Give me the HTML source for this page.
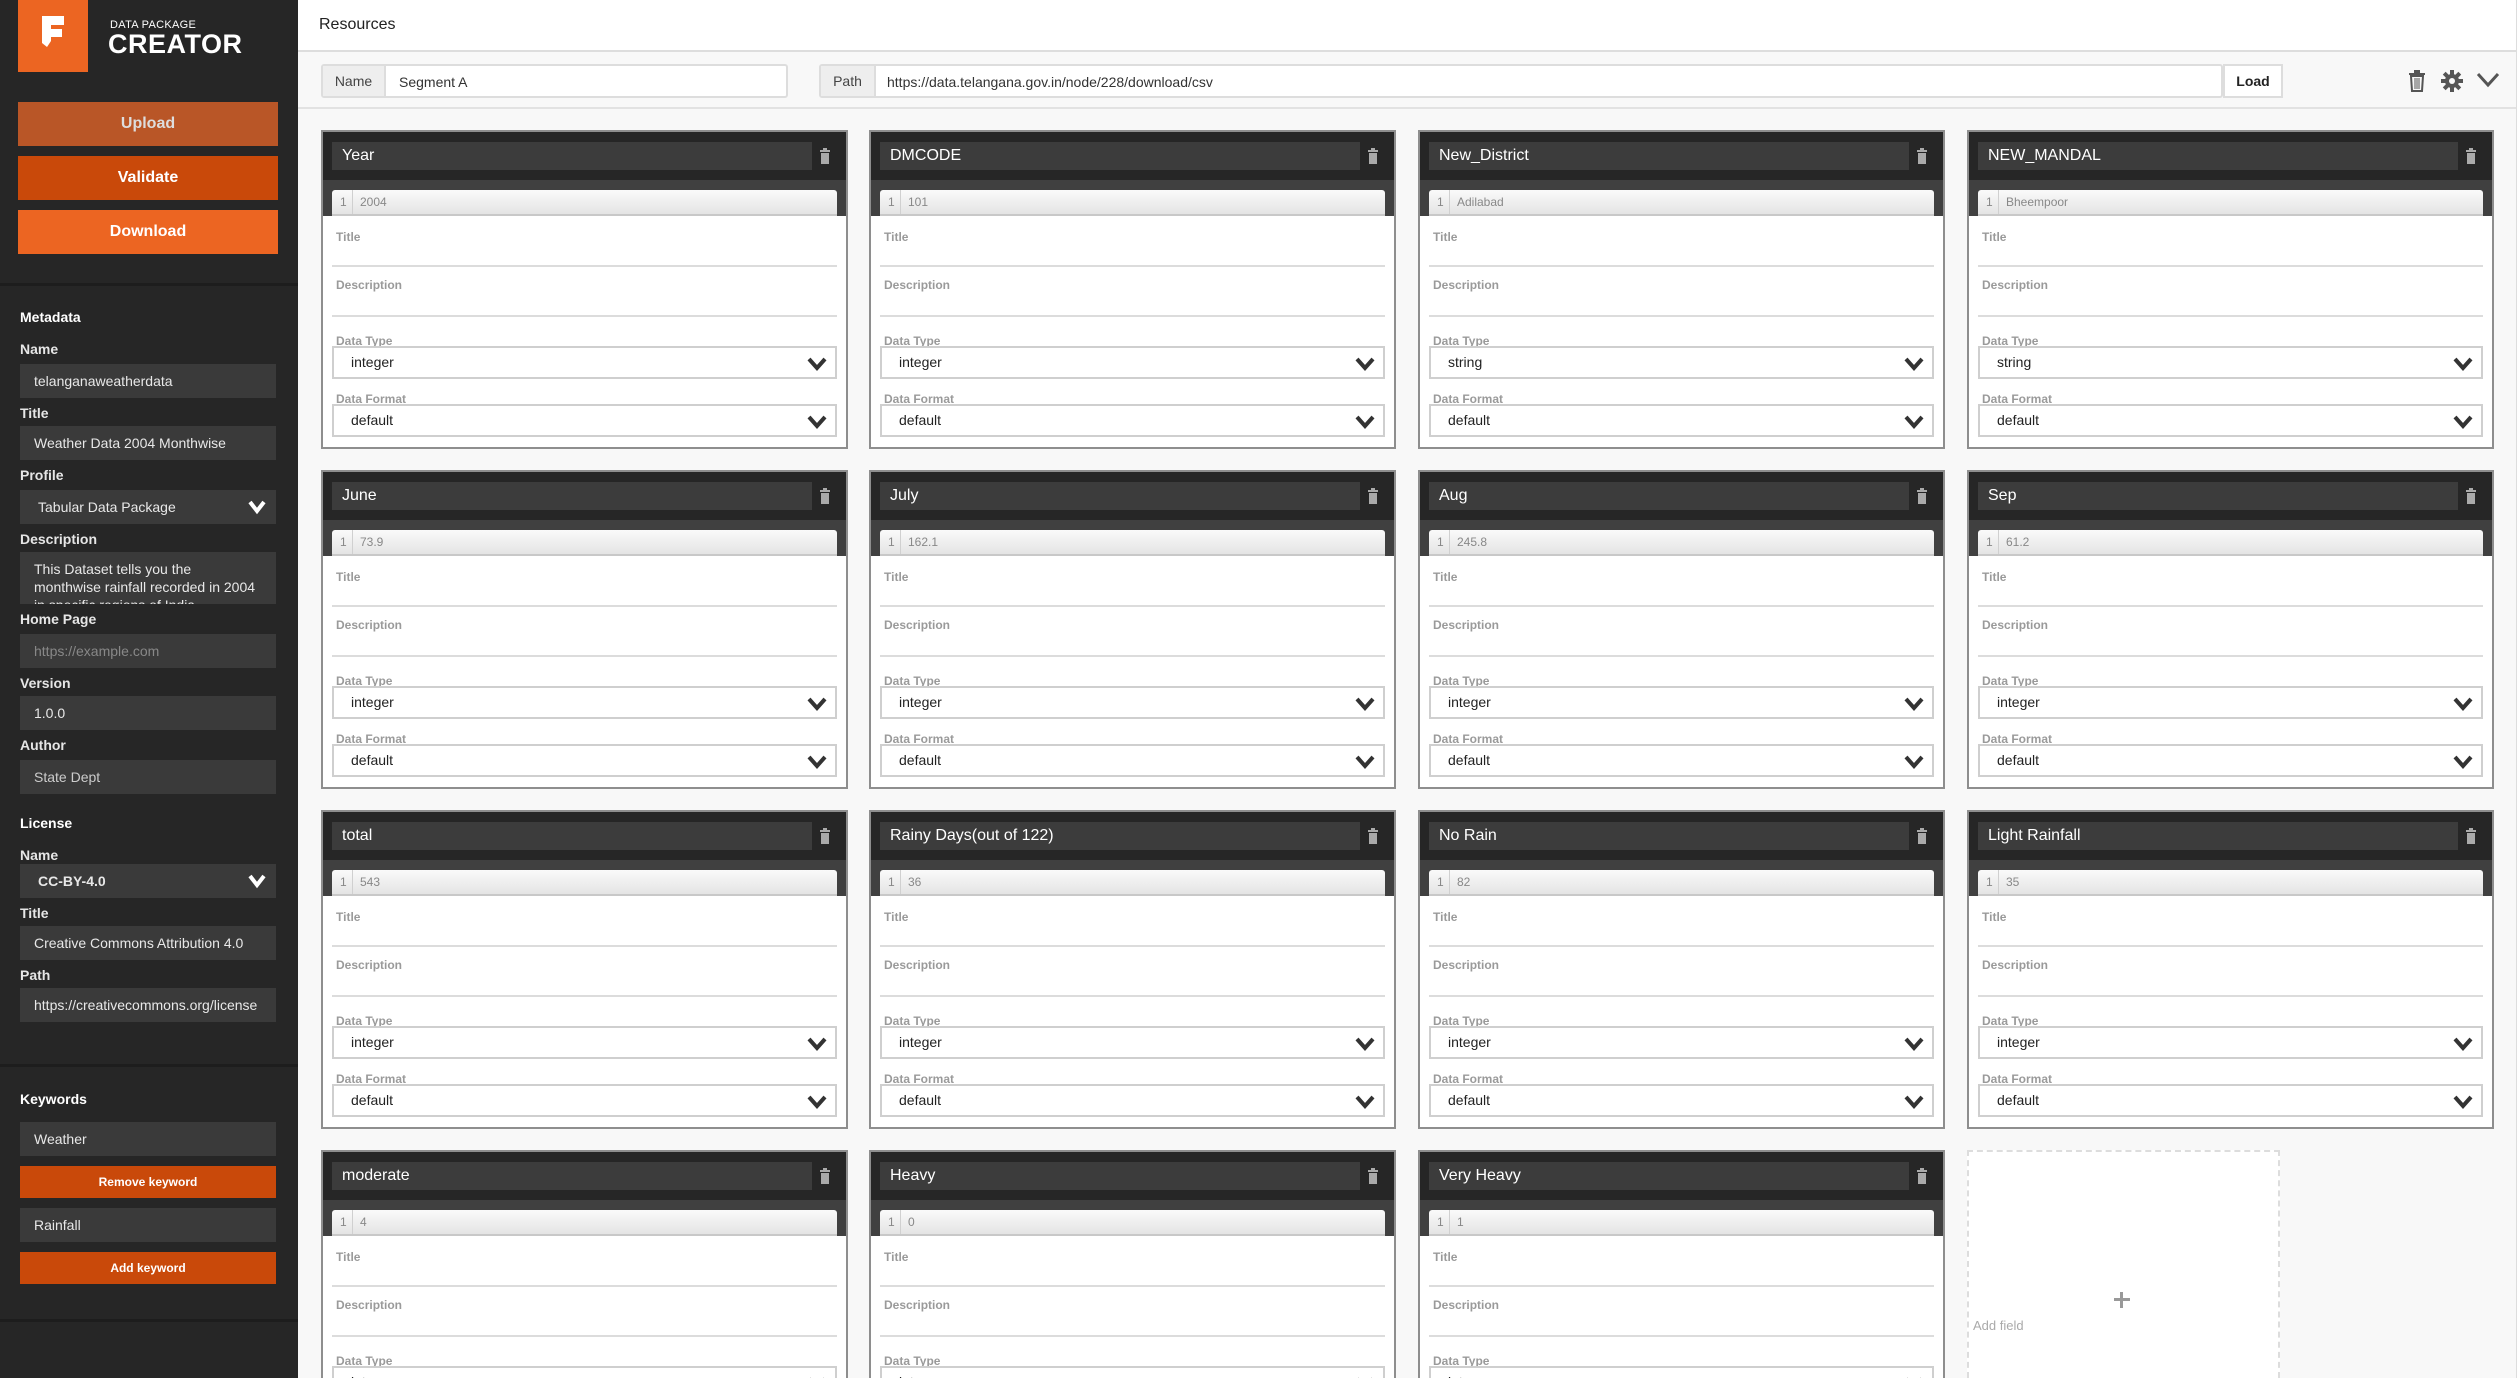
<!DOCTYPE html>
<html style="width:2520px;height:1378px;overflow:hidden"><head><meta charset="utf-8"><style>
*{box-sizing:border-box;margin:0;padding:0}
body{width:2520px;height:1378px;overflow:hidden;background:#f8f8f8;font-family:"Liberation Sans",Arial,sans-serif;position:relative}
.a{position:absolute}
#sb{left:0;top:0;width:298px;height:1378px;background:#262626}
.logo{left:18px;top:0;width:70px;height:72px;background:#ec6522}
.btn{left:18px;width:260px;height:44px;color:#fff;font-weight:bold;font-size:16px;text-align:center;line-height:44px}
.sl{left:20px;color:#e6e6e6;font-size:14px;font-weight:bold}
.si{left:20px;width:256px;height:34px;background:#3a3a3a;color:#e8e8e8;font-size:14px;line-height:34px;padding-left:14px;white-space:nowrap;overflow:hidden}
.sep{left:0;width:298px;height:3px;background:#1d1d1d}
.kb{left:20px;width:256px;height:32px;background:#c9490a;color:#fff;font-weight:bold;font-size:12px;text-align:center;line-height:32px}
.chev{position:absolute;right:10px;top:9px}
.c{position:absolute;width:527px;height:319px;border:2px solid #8e8e8e;background:#fff;overflow:hidden}
.c.last{height:240px;border-bottom:none}
.h{position:absolute;left:0;top:0;width:100%;height:48px;background:#262626}
.n{position:absolute;left:9px;top:10px;width:480px;height:28px;background:#3c3c3c;color:#fff;font-size:16px;line-height:28px;padding-left:10px}
.tr{position:absolute;left:497px;top:16px}
.bd{position:absolute;left:0;top:48px;width:100%;height:36px;background:#404040}
.s{position:absolute;left:9px;top:58px;width:505px;height:26px;background:linear-gradient(#fafafa,#e4e4e4);border-radius:3px 3px 0 0;border-bottom:2px solid #c8c8c8;font-size:12px;color:#888;line-height:24px}
.s i{font-style:normal;position:absolute;left:8px}
.s b{font-weight:normal;position:absolute;left:20px;top:0;width:1px;height:24px;background:#d0d0d0}
.s u{text-decoration:none;position:absolute;left:28px}
.l{position:absolute;left:13px;font-size:12px;font-weight:bold;color:#9a9a9a}
.ul{position:absolute;left:9px;width:505px;height:2px;background:#dcdcdc}
.sel{position:absolute;left:9px;width:505px;height:33px;border:2px solid #cfcfcf;font-size:14px;color:#222;line-height:29px;padding-left:17px}
.sel svg{position:absolute;right:8px;top:8px}
</style></head><body>
<div id="sb" class="a">
 <div class="a logo"><svg width="70" height="72"><path d="M24 16h22v9H33v4h11v8H33v4l-4 6-5-4z" fill="#fff"/></svg></div>
 <div class="a" style="left:110px;top:19px;color:#fff;font-size:11px;letter-spacing:.3px">DATA PACKAGE</div>
 <div class="a" style="left:108px;top:29px;color:#fff;font-size:27px;font-weight:bold;letter-spacing:.5px">CREATOR</div>
 <div class="a btn" style="top:102px;background:#b95627;color:#ddd">Upload</div>
 <div class="a btn" style="top:156px;background:#c9490a">Validate</div>
 <div class="a btn" style="top:210px;background:#ec6522">Download</div>
 <div class="a sep" style="top:283px"></div>
 <div class="a sl" style="top:309px;color:#fff">Metadata</div>
 <div class="a sl" style="top:341px">Name</div>
 <div class="a si" style="top:364px">telanganaweatherdata</div>
 <div class="a sl" style="top:405px">Title</div>
 <div class="a si" style="top:426px">Weather Data 2004 Monthwise</div>
 <div class="a sl" style="top:467px">Profile</div>
 <div class="a si" style="top:490px;padding-left:18px">Tabular Data Package<svg class="chev" width="18" height="16"><path d="M2 3l7 9 7-9" stroke="#fff" stroke-width="4" fill="none"/></svg></div>
 <div class="a sl" style="top:531px">Description</div>
 <div class="a si" style="top:552px;height:52px;line-height:18px;padding-top:8px;padding-right:20px;white-space:normal">This Dataset tells you the monthwise rainfall recorded in 2004 in specific regions of India</div>
 <div class="a sl" style="top:611px">Home Page</div>
 <div class="a si" style="top:634px;color:#888">https://example.com</div>
 <div class="a sl" style="top:675px">Version</div>
 <div class="a si" style="top:696px">1.0.0</div>
 <div class="a sl" style="top:737px">Author</div>
 <div class="a si" style="top:760px;color:#ccc">State Dept</div>
 <div class="a sl" style="top:815px;color:#fff">License</div>
 <div class="a sl" style="top:847px">Name</div>
 <div class="a si" style="top:864px;padding-left:18px;font-weight:bold">CC-BY-4.0<svg class="chev" width="18" height="16"><path d="M2 3l7 9 7-9" stroke="#fff" stroke-width="4" fill="none"/></svg></div>
 <div class="a sl" style="top:905px">Title</div>
 <div class="a si" style="top:926px">Creative Commons Attribution 4.0</div>
 <div class="a sl" style="top:967px">Path</div>
 <div class="a si" style="top:988px">https://creativecommons.org/license</div>
 <div class="a sep" style="top:1064px"></div>
 <div class="a sl" style="top:1091px;color:#fff">Keywords</div>
 <div class="a si" style="top:1122px">Weather</div>
 <div class="a kb" style="top:1166px">Remove keyword</div>
 <div class="a si" style="top:1208px">Rainfall</div>
 <div class="a kb" style="top:1252px">Add keyword</div>
 <div class="a sep" style="top:1319px"></div>
</div>
<div class="a" style="left:298px;top:0;width:2222px;height:52px;background:#fff;border-bottom:2px solid #ddd"></div>
<div class="a" style="left:319px;top:16px;font-size:16px;color:#222">Resources</div>
<div class="a" style="left:298px;top:107px;width:2218px;height:2px;background:#e2e2e2"></div>
<div class="a" style="left:2516px;top:0;width:4px;height:1378px;background:#fff;border-left:1px solid #ddd"></div>
<div class="a" style="left:321px;top:64px;width:467px;height:34px;border:2px solid #ddd;background:#fff;border-radius:3px">
 <div class="a" style="left:0;top:0;width:63px;height:30px;background:#eee;border-right:2px solid #ddd;font-size:14px;color:#444;line-height:30px;text-align:center">Name</div>
 <div class="a" style="left:76px;top:0;font-size:14px;color:#333;line-height:32px">Segment A</div>
</div>
<div class="a" style="left:819px;top:64px;width:1404px;height:34px;border:2px solid #ddd;background:#fff;border-radius:3px">
 <div class="a" style="left:0;top:0;width:55px;height:30px;background:#eee;border-right:2px solid #ddd;font-size:14px;color:#444;line-height:30px;text-align:center">Path</div>
 <div class="a" style="left:66px;top:0;font-size:14px;color:#333;line-height:32px">https://data.telangana.gov.in/node/228/download/csv</div>
</div>
<div class="a" style="left:2223px;top:64px;width:60px;height:34px;border:2px solid #ddd;background:#fff;font-size:14px;font-weight:bold;line-height:30px;text-align:center;color:#222">Load</div>
<svg class="a" style="left:2408px;top:70px" width="18" height="22"><rect x="1" y="3" width="16" height="2" fill="#555"/><rect x="6" y="0" width="6" height="3" fill="#555"/><path d="M3 6h12l-1 15H4z" fill="none" stroke="#555" stroke-width="2"/><path d="M7 8v11M9 8v11M11 8v11" stroke="#555" stroke-width="1"/></svg>
<svg class="a" style="left:2441px;top:70px" width="22" height="22" viewBox="0 0 22 22"><g fill="#555"><circle cx="11" cy="11" r="7"/><rect x="9" y="0" width="4" height="22"/><rect x="0" y="9" width="22" height="4"/><rect x="9" y="0" width="4" height="22" transform="rotate(45 11 11)"/><rect x="9" y="0" width="4" height="22" transform="rotate(-45 11 11)"/></g><circle cx="11" cy="11" r="3" fill="#f8f8f8"/></svg>
<svg class="a" style="left:2476px;top:72px" width="24" height="16"><path d="M2 2l10 11 10-11" stroke="#555" stroke-width="3" fill="none"/></svg>

<div class="c" style="left:321px;top:130px"><div class="h"><div class="n">Year</div><svg class="tr" width="10" height="16"><rect x="0" y="2" width="10" height="2" fill="#aaa"/><rect x="3" y="0" width="4" height="2" fill="#aaa"/><rect x="1" y="5" width="8" height="11" fill="#aaa"/></svg></div><div class="bd"></div><div class="s"><i>1</i><b></b><u>2004</u></div><div class="l" style="top:98px">Title</div><div class="ul" style="top:133px"></div><div class="l" style="top:146px">Description</div><div class="ul" style="top:183px"></div><div class="l" style="top:202px">Data Type</div><div class="sel" style="top:214px">integer<svg width="20" height="16"><path d="M2 3l8 9 8-9" stroke="#333" stroke-width="4" fill="none"/></svg></div><div class="l" style="top:260px">Data Format</div><div class="sel" style="top:272px">default<svg width="20" height="16"><path d="M2 3l8 9 8-9" stroke="#333" stroke-width="4" fill="none"/></svg></div></div>
<div class="c" style="left:869px;top:130px"><div class="h"><div class="n">DMCODE</div><svg class="tr" width="10" height="16"><rect x="0" y="2" width="10" height="2" fill="#aaa"/><rect x="3" y="0" width="4" height="2" fill="#aaa"/><rect x="1" y="5" width="8" height="11" fill="#aaa"/></svg></div><div class="bd"></div><div class="s"><i>1</i><b></b><u>101</u></div><div class="l" style="top:98px">Title</div><div class="ul" style="top:133px"></div><div class="l" style="top:146px">Description</div><div class="ul" style="top:183px"></div><div class="l" style="top:202px">Data Type</div><div class="sel" style="top:214px">integer<svg width="20" height="16"><path d="M2 3l8 9 8-9" stroke="#333" stroke-width="4" fill="none"/></svg></div><div class="l" style="top:260px">Data Format</div><div class="sel" style="top:272px">default<svg width="20" height="16"><path d="M2 3l8 9 8-9" stroke="#333" stroke-width="4" fill="none"/></svg></div></div>
<div class="c" style="left:1418px;top:130px"><div class="h"><div class="n">New_District</div><svg class="tr" width="10" height="16"><rect x="0" y="2" width="10" height="2" fill="#aaa"/><rect x="3" y="0" width="4" height="2" fill="#aaa"/><rect x="1" y="5" width="8" height="11" fill="#aaa"/></svg></div><div class="bd"></div><div class="s"><i>1</i><b></b><u>Adilabad</u></div><div class="l" style="top:98px">Title</div><div class="ul" style="top:133px"></div><div class="l" style="top:146px">Description</div><div class="ul" style="top:183px"></div><div class="l" style="top:202px">Data Type</div><div class="sel" style="top:214px">string<svg width="20" height="16"><path d="M2 3l8 9 8-9" stroke="#333" stroke-width="4" fill="none"/></svg></div><div class="l" style="top:260px">Data Format</div><div class="sel" style="top:272px">default<svg width="20" height="16"><path d="M2 3l8 9 8-9" stroke="#333" stroke-width="4" fill="none"/></svg></div></div>
<div class="c" style="left:1967px;top:130px"><div class="h"><div class="n">NEW_MANDAL</div><svg class="tr" width="10" height="16"><rect x="0" y="2" width="10" height="2" fill="#aaa"/><rect x="3" y="0" width="4" height="2" fill="#aaa"/><rect x="1" y="5" width="8" height="11" fill="#aaa"/></svg></div><div class="bd"></div><div class="s"><i>1</i><b></b><u>Bheempoor</u></div><div class="l" style="top:98px">Title</div><div class="ul" style="top:133px"></div><div class="l" style="top:146px">Description</div><div class="ul" style="top:183px"></div><div class="l" style="top:202px">Data Type</div><div class="sel" style="top:214px">string<svg width="20" height="16"><path d="M2 3l8 9 8-9" stroke="#333" stroke-width="4" fill="none"/></svg></div><div class="l" style="top:260px">Data Format</div><div class="sel" style="top:272px">default<svg width="20" height="16"><path d="M2 3l8 9 8-9" stroke="#333" stroke-width="4" fill="none"/></svg></div></div>

<div class="c" style="left:321px;top:470px"><div class="h"><div class="n">June</div><svg class="tr" width="10" height="16"><rect x="0" y="2" width="10" height="2" fill="#aaa"/><rect x="3" y="0" width="4" height="2" fill="#aaa"/><rect x="1" y="5" width="8" height="11" fill="#aaa"/></svg></div><div class="bd"></div><div class="s"><i>1</i><b></b><u>73.9</u></div><div class="l" style="top:98px">Title</div><div class="ul" style="top:133px"></div><div class="l" style="top:146px">Description</div><div class="ul" style="top:183px"></div><div class="l" style="top:202px">Data Type</div><div class="sel" style="top:214px">integer<svg width="20" height="16"><path d="M2 3l8 9 8-9" stroke="#333" stroke-width="4" fill="none"/></svg></div><div class="l" style="top:260px">Data Format</div><div class="sel" style="top:272px">default<svg width="20" height="16"><path d="M2 3l8 9 8-9" stroke="#333" stroke-width="4" fill="none"/></svg></div></div>
<div class="c" style="left:869px;top:470px"><div class="h"><div class="n">July</div><svg class="tr" width="10" height="16"><rect x="0" y="2" width="10" height="2" fill="#aaa"/><rect x="3" y="0" width="4" height="2" fill="#aaa"/><rect x="1" y="5" width="8" height="11" fill="#aaa"/></svg></div><div class="bd"></div><div class="s"><i>1</i><b></b><u>162.1</u></div><div class="l" style="top:98px">Title</div><div class="ul" style="top:133px"></div><div class="l" style="top:146px">Description</div><div class="ul" style="top:183px"></div><div class="l" style="top:202px">Data Type</div><div class="sel" style="top:214px">integer<svg width="20" height="16"><path d="M2 3l8 9 8-9" stroke="#333" stroke-width="4" fill="none"/></svg></div><div class="l" style="top:260px">Data Format</div><div class="sel" style="top:272px">default<svg width="20" height="16"><path d="M2 3l8 9 8-9" stroke="#333" stroke-width="4" fill="none"/></svg></div></div>
<div class="c" style="left:1418px;top:470px"><div class="h"><div class="n">Aug</div><svg class="tr" width="10" height="16"><rect x="0" y="2" width="10" height="2" fill="#aaa"/><rect x="3" y="0" width="4" height="2" fill="#aaa"/><rect x="1" y="5" width="8" height="11" fill="#aaa"/></svg></div><div class="bd"></div><div class="s"><i>1</i><b></b><u>245.8</u></div><div class="l" style="top:98px">Title</div><div class="ul" style="top:133px"></div><div class="l" style="top:146px">Description</div><div class="ul" style="top:183px"></div><div class="l" style="top:202px">Data Type</div><div class="sel" style="top:214px">integer<svg width="20" height="16"><path d="M2 3l8 9 8-9" stroke="#333" stroke-width="4" fill="none"/></svg></div><div class="l" style="top:260px">Data Format</div><div class="sel" style="top:272px">default<svg width="20" height="16"><path d="M2 3l8 9 8-9" stroke="#333" stroke-width="4" fill="none"/></svg></div></div>
<div class="c" style="left:1967px;top:470px"><div class="h"><div class="n">Sep</div><svg class="tr" width="10" height="16"><rect x="0" y="2" width="10" height="2" fill="#aaa"/><rect x="3" y="0" width="4" height="2" fill="#aaa"/><rect x="1" y="5" width="8" height="11" fill="#aaa"/></svg></div><div class="bd"></div><div class="s"><i>1</i><b></b><u>61.2</u></div><div class="l" style="top:98px">Title</div><div class="ul" style="top:133px"></div><div class="l" style="top:146px">Description</div><div class="ul" style="top:183px"></div><div class="l" style="top:202px">Data Type</div><div class="sel" style="top:214px">integer<svg width="20" height="16"><path d="M2 3l8 9 8-9" stroke="#333" stroke-width="4" fill="none"/></svg></div><div class="l" style="top:260px">Data Format</div><div class="sel" style="top:272px">default<svg width="20" height="16"><path d="M2 3l8 9 8-9" stroke="#333" stroke-width="4" fill="none"/></svg></div></div>

<div class="c" style="left:321px;top:810px"><div class="h"><div class="n">total</div><svg class="tr" width="10" height="16"><rect x="0" y="2" width="10" height="2" fill="#aaa"/><rect x="3" y="0" width="4" height="2" fill="#aaa"/><rect x="1" y="5" width="8" height="11" fill="#aaa"/></svg></div><div class="bd"></div><div class="s"><i>1</i><b></b><u>543</u></div><div class="l" style="top:98px">Title</div><div class="ul" style="top:133px"></div><div class="l" style="top:146px">Description</div><div class="ul" style="top:183px"></div><div class="l" style="top:202px">Data Type</div><div class="sel" style="top:214px">integer<svg width="20" height="16"><path d="M2 3l8 9 8-9" stroke="#333" stroke-width="4" fill="none"/></svg></div><div class="l" style="top:260px">Data Format</div><div class="sel" style="top:272px">default<svg width="20" height="16"><path d="M2 3l8 9 8-9" stroke="#333" stroke-width="4" fill="none"/></svg></div></div>
<div class="c" style="left:869px;top:810px"><div class="h"><div class="n">Rainy Days(out of 122)</div><svg class="tr" width="10" height="16"><rect x="0" y="2" width="10" height="2" fill="#aaa"/><rect x="3" y="0" width="4" height="2" fill="#aaa"/><rect x="1" y="5" width="8" height="11" fill="#aaa"/></svg></div><div class="bd"></div><div class="s"><i>1</i><b></b><u>36</u></div><div class="l" style="top:98px">Title</div><div class="ul" style="top:133px"></div><div class="l" style="top:146px">Description</div><div class="ul" style="top:183px"></div><div class="l" style="top:202px">Data Type</div><div class="sel" style="top:214px">integer<svg width="20" height="16"><path d="M2 3l8 9 8-9" stroke="#333" stroke-width="4" fill="none"/></svg></div><div class="l" style="top:260px">Data Format</div><div class="sel" style="top:272px">default<svg width="20" height="16"><path d="M2 3l8 9 8-9" stroke="#333" stroke-width="4" fill="none"/></svg></div></div>
<div class="c" style="left:1418px;top:810px"><div class="h"><div class="n">No Rain</div><svg class="tr" width="10" height="16"><rect x="0" y="2" width="10" height="2" fill="#aaa"/><rect x="3" y="0" width="4" height="2" fill="#aaa"/><rect x="1" y="5" width="8" height="11" fill="#aaa"/></svg></div><div class="bd"></div><div class="s"><i>1</i><b></b><u>82</u></div><div class="l" style="top:98px">Title</div><div class="ul" style="top:133px"></div><div class="l" style="top:146px">Description</div><div class="ul" style="top:183px"></div><div class="l" style="top:202px">Data Type</div><div class="sel" style="top:214px">integer<svg width="20" height="16"><path d="M2 3l8 9 8-9" stroke="#333" stroke-width="4" fill="none"/></svg></div><div class="l" style="top:260px">Data Format</div><div class="sel" style="top:272px">default<svg width="20" height="16"><path d="M2 3l8 9 8-9" stroke="#333" stroke-width="4" fill="none"/></svg></div></div>
<div class="c" style="left:1967px;top:810px"><div class="h"><div class="n">Light Rainfall</div><svg class="tr" width="10" height="16"><rect x="0" y="2" width="10" height="2" fill="#aaa"/><rect x="3" y="0" width="4" height="2" fill="#aaa"/><rect x="1" y="5" width="8" height="11" fill="#aaa"/></svg></div><div class="bd"></div><div class="s"><i>1</i><b></b><u>35</u></div><div class="l" style="top:98px">Title</div><div class="ul" style="top:133px"></div><div class="l" style="top:146px">Description</div><div class="ul" style="top:183px"></div><div class="l" style="top:202px">Data Type</div><div class="sel" style="top:214px">integer<svg width="20" height="16"><path d="M2 3l8 9 8-9" stroke="#333" stroke-width="4" fill="none"/></svg></div><div class="l" style="top:260px">Data Format</div><div class="sel" style="top:272px">default<svg width="20" height="16"><path d="M2 3l8 9 8-9" stroke="#333" stroke-width="4" fill="none"/></svg></div></div>

<div class="c last" style="left:321px;top:1150px"><div class="h"><div class="n">moderate</div><svg class="tr" width="10" height="16"><rect x="0" y="2" width="10" height="2" fill="#aaa"/><rect x="3" y="0" width="4" height="2" fill="#aaa"/><rect x="1" y="5" width="8" height="11" fill="#aaa"/></svg></div><div class="bd"></div><div class="s"><i>1</i><b></b><u>4</u></div><div class="l" style="top:98px">Title</div><div class="ul" style="top:133px"></div><div class="l" style="top:146px">Description</div><div class="ul" style="top:183px"></div><div class="l" style="top:202px">Data Type</div><div class="sel" style="top:214px">integer<svg width="20" height="16"><path d="M2 3l8 9 8-9" stroke="#333" stroke-width="4" fill="none"/></svg></div></div>
<div class="c last" style="left:869px;top:1150px"><div class="h"><div class="n">Heavy</div><svg class="tr" width="10" height="16"><rect x="0" y="2" width="10" height="2" fill="#aaa"/><rect x="3" y="0" width="4" height="2" fill="#aaa"/><rect x="1" y="5" width="8" height="11" fill="#aaa"/></svg></div><div class="bd"></div><div class="s"><i>1</i><b></b><u>0</u></div><div class="l" style="top:98px">Title</div><div class="ul" style="top:133px"></div><div class="l" style="top:146px">Description</div><div class="ul" style="top:183px"></div><div class="l" style="top:202px">Data Type</div><div class="sel" style="top:214px">integer<svg width="20" height="16"><path d="M2 3l8 9 8-9" stroke="#333" stroke-width="4" fill="none"/></svg></div></div>
<div class="c last" style="left:1418px;top:1150px"><div class="h"><div class="n">Very Heavy</div><svg class="tr" width="10" height="16"><rect x="0" y="2" width="10" height="2" fill="#aaa"/><rect x="3" y="0" width="4" height="2" fill="#aaa"/><rect x="1" y="5" width="8" height="11" fill="#aaa"/></svg></div><div class="bd"></div><div class="s"><i>1</i><b></b><u>1</u></div><div class="l" style="top:98px">Title</div><div class="ul" style="top:133px"></div><div class="l" style="top:146px">Description</div><div class="ul" style="top:183px"></div><div class="l" style="top:202px">Data Type</div><div class="sel" style="top:214px">integer<svg width="20" height="16"><path d="M2 3l8 9 8-9" stroke="#333" stroke-width="4" fill="none"/></svg></div></div>

<div class="a" style="left:1967px;top:1150px;width:313px;height:228px;border:2px dashed #ddd;border-bottom:none;background:#fff">
 <div class="a" style="left:145px;top:146px;width:16px;height:3px;background:#999"></div>
 <div class="a" style="left:151px;top:140px;width:3px;height:16px;background:#999"></div>
 <div class="a" style="left:4px;top:166px;font-size:13px;color:#aaa">Add field</div>
</div>
</body></html>
